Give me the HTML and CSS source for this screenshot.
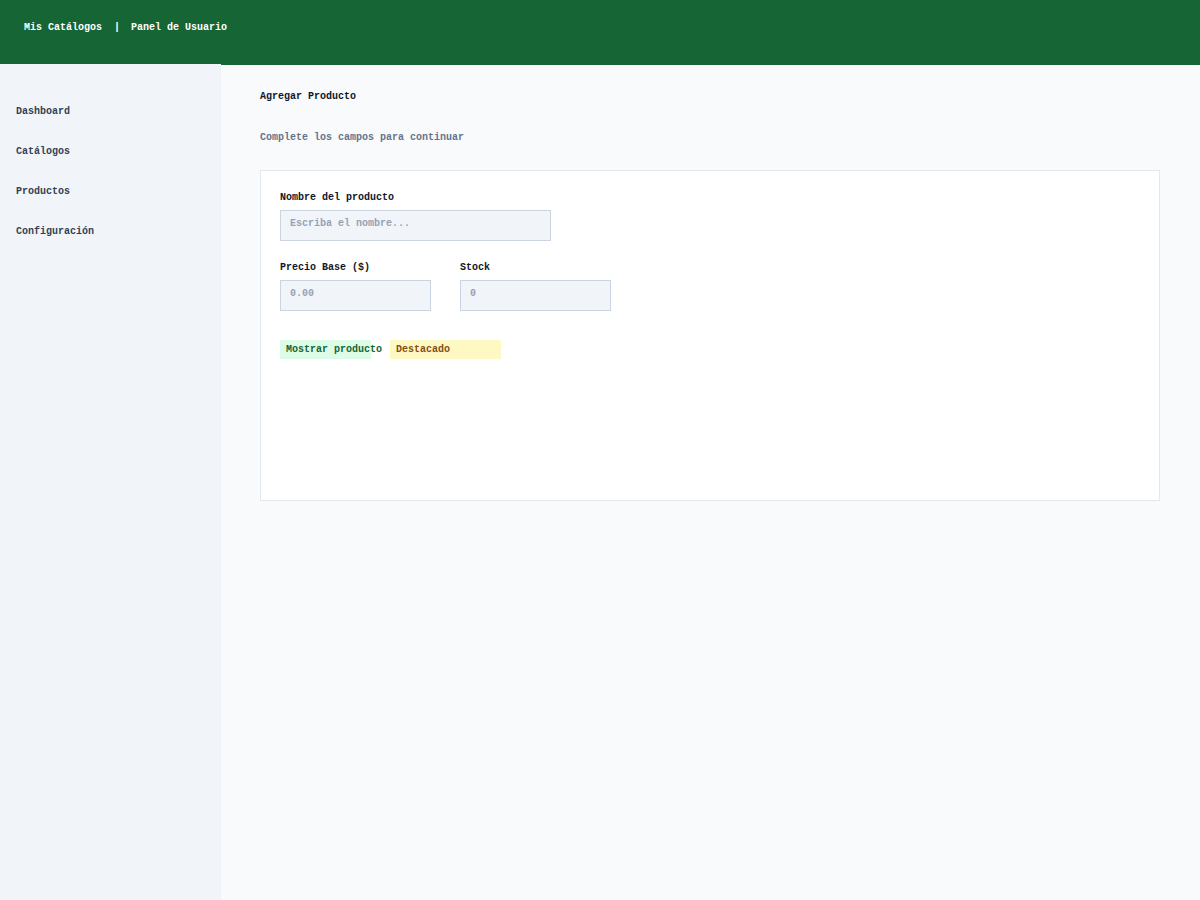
FILE: index.html
```html
<!DOCTYPE html>
<html lang="es">
<head>
<meta charset="utf-8">
<title>Mis Catálogos</title>
<link rel="stylesheet" href="styles.css">
</head>
<body>
<header class="topbar">
  <span class="brand">Mis Catálogos</span>
  <span class="sep">|</span>
  <span class="brand">Panel de Usuario</span>
</header>
<div class="layout">
  <nav class="sidebar">
    <a class="nav-item">Dashboard</a>
    <a class="nav-item">Catálogos</a>
    <a class="nav-item">Productos</a>
    <a class="nav-item">Configuración</a>
  </nav>
  <main class="main">
    <h1 class="title">Agregar Producto</h1>
    <p class="subtitle">Complete los campos para continuar</p>
    <section class="card">
      <div class="field">
        <label class="label">Nombre del producto</label>
        <input class="input input-wide" type="text" placeholder="Escriba el nombre...">
      </div>
      <div class="row">
        <div class="field">
          <label class="label">Precio Base ($)</label>
          <input class="input input-narrow" type="text" placeholder="0.00">
        </div>
        <div class="field">
          <label class="label">Stock</label>
          <input class="input input-narrow" type="text" placeholder="0">
        </div>
      </div>
      <div class="toggles">
        <span class="toggle toggle-green">Mostrar producto</span>
        <span class="toggle toggle-yellow">Destacado</span>
      </div>
    </section>
  </main>
</div>
</body>
</html>
```

FILE: styles.css
```css
* {
  box-sizing: border-box;
}

html, body {
  margin: 0;
  padding: 0;
}

body {
  font-family: "Liberation Mono", "Courier New", monospace;
  font-size: 10px;
  font-weight: bold;
  line-height: 12px;
  background: #f8fafc;
  color: #0f172a;
  min-height: 900px;
}

.topbar {
  height: 64px;
  background: #166534;
  color: #ffffff;
  display: flex;
  align-items: flex-start;
  padding: 22px 24px 0;
}

.sep {
  margin: 0 11px 0 12px;
}

.layout {
  display: flex;
  min-height: 836px;
}

.sidebar {
  width: 221px;
  flex: none;
  background: #f1f5f9;
  padding-top: 28px;
  display: flex;
  flex-direction: column;
}

.nav-item {
  display: block;
  height: 40px;
  padding: 14px 16px;
  color: #334155;
  text-decoration: none;
}

.main {
  flex: 1;
  border-top: 1px solid #166534;
  padding: 26px 40px 40px 39px;
}

.title {
  margin: 0;
  font-size: 10px;
  line-height: 12px;
  font-weight: bold;
  color: #0f172a;
}

.subtitle {
  margin: 29px 0 0;
  color: #64748b;
}

.card {
  margin-top: 26px;
  background: #ffffff;
  border: 1px solid #e2e8f0;
  height: 331px;
  padding: 21px 19px 19px;
}

.field {
  display: flex;
  flex-direction: column;
  align-items: flex-start;
}

.label {
  color: #0f172a;
  margin-bottom: 6px;
}

.input {
  font-family: "Liberation Mono", "Courier New", monospace;
  font-size: 10px;
  font-weight: bold;
  line-height: 12px;
  height: 31px;
  padding: 6px 9px 11px;
  background: #f1f5f9;
  border: 1px solid #cbd5e1;
  border-radius: 0;
  color: #0f172a;
  outline: none;
}

.input::placeholder {
  color: #94a3b8;
  opacity: 1;
}

.input-wide {
  width: 271px;
}

.input-narrow {
  width: 151px;
}

.row {
  display: flex;
  gap: 29px;
  margin-top: 21px;
}

.toggles {
  display: flex;
  gap: 19px;
  margin-top: 29px;
}

.toggle {
  display: block;
  height: 19px;
  padding: 4px 6px 3px;
  white-space: nowrap;
}

.toggle-green {
  width: 91px;
  background: #dcfce7;
  color: #166534;
}

.toggle-yellow {
  width: 111px;
  background: #fef9c3;
  color: #854d0e;
}
```
